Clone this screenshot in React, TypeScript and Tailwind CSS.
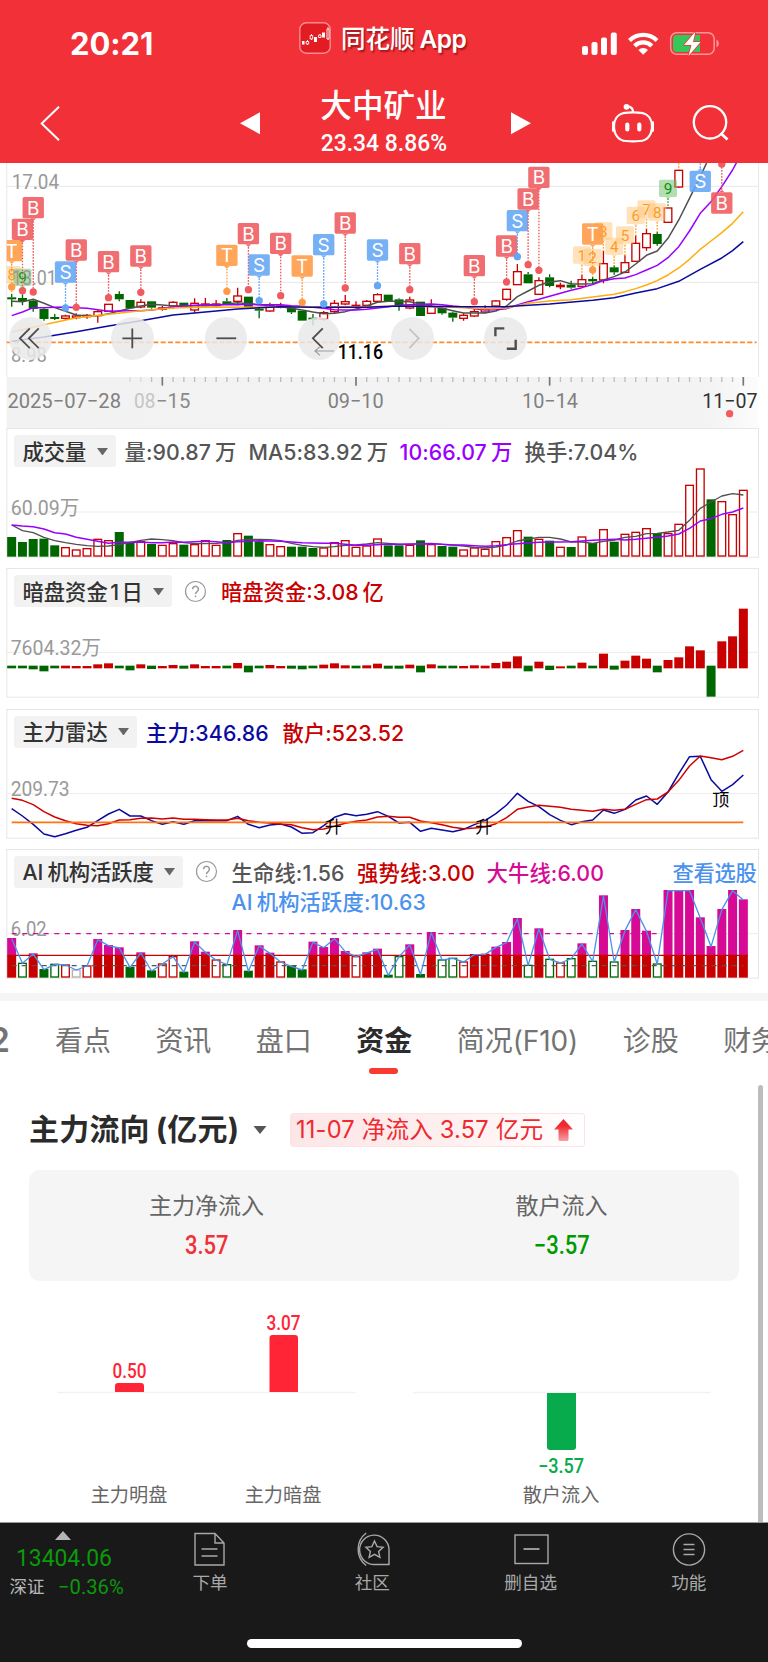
import type { ReactNode } from 'react'

// --- Types -------------------------------------------------------------------

type Point = [index: number, y: number]
type Candle = [color: 'r' | 'g', high: number, low: number, top: number, bottom: number]
type Bar = [kind: string, value: number]

// Charts are drawn in 3x units (2304 wide) on a 768px page
const FIRST = 35
const STEP = 32.28
const cx = (i: number) => FIRST + STEP * i

const RED = '#c80000'
const GREEN = '#006600'
const MAGENTA = '#d60a95'
const PURPLE = '#9a00ff'
const GRAY = '#505050'
const NAVY = '#0a0aa0'

const line = (points: Point[]) => points.map(([i, y]) => `${cx(i).toFixed(1)},${y}`).join(' ')
const series = (values: number[]) => line(values.map((y, i) => [i, y] as Point))

const parseBars = (source: string): Bar[] =>
  source.split(' ').map((item) => [item[0], Number(item.slice(1))])

// --- Data --------------------------------------------------------------------

const candles: Candle[] = [
  ['g', 402, 440, 412, 418], ['g', 405, 436, 414, 424], ['g', 418, 455, 422, 447],
  ['g', 445, 482, 447, 477], ['g', 462, 480, 471, 477], ['r', 464, 480, 468, 475],
  ['r', 460, 478, 468, 473], ['r', 462, 476, 466, 470], ['r', 450, 488, 455, 467],
  ['r', 432, 455, 433, 454], ['g', 394, 424, 402, 418], ['g', 420, 445, 420, 445],
  ['r', 418, 445, 427, 441], ['g', 424, 446, 424, 443], ['r', 438, 452, 444, 448],
  ['r', 424, 446, 427, 438], ['g', 428, 440, 428, 440], ['r', 415, 458, 430, 450],
  ['r', 414, 440, 432, 437], ['r', 420, 440, 432, 437], ['g', 414, 435, 424, 433],
  ['r', 383, 436, 408, 424], ['g', 410, 442, 410, 442], ['g', 440, 475, 446, 452],
  ['r', 428, 455, 436, 453], ['r', 428, 445, 438, 442], ['g', 440, 462, 443, 457],
  ['g', 452, 482, 452, 482], ['g', 462, 496, 473, 479], ['r', 453, 482, 458, 477],
  ['r', 420, 460, 430, 455], ['r', 405, 436, 425, 432], ['r', 424, 444, 436, 440],
  ['r', 420, 440, 424, 436], ['r', 400, 428, 404, 424], ['g', 404, 424, 404, 424],
  ['g', 415, 452, 418, 436], ['r', 410, 448, 420, 444], ['g', 425, 468, 425, 468],
  ['r', 418, 462, 440, 460], ['g', 440, 464, 444, 460], ['g', 455, 485, 458, 473],
  ['r', 460, 482, 466, 475], ['r', 448, 470, 455, 468], ['r', 436, 460, 448, 456],
  ['r', 420, 440, 423, 438], ['r', 386, 422, 388, 418], ['r', 312, 375, 335, 374],
  ['g', 336, 370, 343, 370], ['r', 352, 404, 362, 403], ['g', 343, 382, 352, 378],
  ['r', 368, 388, 376, 380], ['g', 362, 386, 374, 383], ['r', 344, 380, 359, 379],
  ['g', 350, 372, 357, 364], ['r', 272, 370, 311, 360], ['g', 316, 344, 322, 337],
  ['r', 285, 340, 308, 337], ['r', 226, 305, 250, 304], ['r', 206, 272, 221, 263],
  ['g', 215, 257, 222, 252], ['r', 143, 189, 144, 187], ['r', 28, 83, 31, 81],
]

const ma5 = [
  424, 425, 418, 430, 443, 454, 465, 468, 467, 461, 453, 445, 438, 433, 435, 438, 438, 437, 437, 436,
  432, 428, 431, 434, 437, 440, 445, 450, 456, 461, 460, 455, 447, 438, 427, 424, 424, 425, 432, 438,
  445, 452, 459, 459, 459, 453, 438, 410, 393, 376, 366, 362, 372, 372, 371, 360, 350, 336, 312, 286,
  273, 235, 180, 115, 50, -20,
]
const ma10 = [
  467, 456, 443, 443, 442, 441, 443, 445, 449, 454, 453, 452, 452, 450, 446, 441, 438, 436, 434, 434,
  434, 434, 433, 434, 434, 434, 437, 439, 442, 445, 449, 450, 450, 448, 444, 440, 436, 434, 433, 432,
  434, 438, 441, 446, 450, 449, 446, 435, 425, 418, 409, 400, 391, 383, 374, 362, 356, 354, 344, 330,
  316, 293, 260, 213, 160, 125, 80, 30, -30,
]
const ma20: Point[] = [
  [0, 516], [3, 494], [6, 473], [9, 463], [12, 452], [15, 444], [18, 441], [21, 442], [24, 441],
  [28, 440], [33, 440], [36, 438], [40, 440], [44, 446], [46, 444], [48, 430], [50, 423], [52, 419],
  [54, 411], [56, 403], [57, 395], [58, 386], [59, 375], [60, 362], [61, 345], [62, 324], [63, 298],
  [64, 268], [65, 243], [66, 218], [67, 190], [68, 155],
]
const ma30: Point[] = [
  [0, 544], [3, 531], [6, 515], [9, 498], [12, 482], [15, 465], [18, 456], [21, 447], [25, 440],
  [28, 442], [33, 442], [36, 438], [42, 440], [46, 440], [50, 432], [54, 421], [56, 413], [58, 399],
  [60, 386], [62, 364], [64, 328], [66, 294], [67, 272], [68, 245],
]

const signals: [index: number, letter: 'B' | 'S' | 'T', top: number, dot: number][] = [
  [0, 'T', 240, 381], [1, 'B', 176, 392], [2, 'B', 111, 396], [6, 'B', 238, 442], [5, 'S', 304, 444],
  [9, 'B', 273, 413], [12, 'B', 256, 397], [20, 'T', 254, 394], [22, 'B', 189, 389],
  [23, 'S', 283, 422], [25, 'B', 218, 407], [27, 'T', 286, 427], [29, 'S', 222, 432],
  [31, 'B', 157, 384], [34, 'S', 238, 377], [37, 'B', 249, 389], [43, 'B', 285, 425],
  [46, 'B', 226, 366], [47, 'S', 150, 290], [48, 'B', 85, 314], [49, 'B', 20, 331],
  [54, 'T', 190, 330],
]
const signalsAbove: [index: number, letter: 'B' | 'S' | 'T', top: number, dot: number][] = [
  [64, 'S', 32, -20], [66, 'B', 97, 12],
]
const signalColor = { B: '#ef5b5f', S: '#64a6f4', T: '#ff9a45' }

const counts: [index: number, label: string, top: number, end: number][] = [
  [53, '1', 259, 346], [54, '2', 266, 352], [55, '3', 187, 274], [56, '4', 233, 318],
  [57, '5', 199, 287], [58, '6', 140, 228], [59, '7', 121, 208], [60, '8', 130, 217],
  [61, '9', 59, 144], [0, '8', 318, 402], [1, '9', 326, 405],
]

const volumes = parseBars(
  'g337 g352 g343 g342 g362 r367 r374 r370 r342 r346 g322 g355 r349 g358 r360 r355 g360 r358 r346 r360 g346 r325 g333 g350 r358 r364 g366 g366 g370 r368 r352 r346 r366 r362 r341 g362 g362 r360 g347 r358 g364 g366 r374 r368 r372 r349 r337 r316 g336 r342 g348 r366 g367 r335 g355 r313 g351 r327 r321 r310 g325 r325 r297 r180 r131 g224 r229 r268 r195',
)
const volMa5 = [
  301, 318, 324, 338, 348, 354, 359, 363, 365, 364, 360, 353, 347, 343, 345, 348, 354, 357, 357, 356,
  354, 347, 344, 344, 345, 348, 356, 362, 366, 368, 366, 362, 361, 358, 354, 356, 359, 359, 357, 356,
  359, 361, 364, 368, 370, 367, 361, 349, 343, 338, 338, 343, 352, 352, 356, 350, 346, 338, 335, 327,
  326, 322, 317, 287, 251, 232, 214, 207, 211,
]
const volMa10 = [
  301, 304, 306, 313, 324, 328, 338, 344, 350, 356, 353, 353, 352, 354, 354, 352, 353, 351, 350, 351,
  354, 351, 350, 348, 349, 350, 352, 354, 355, 356, 356, 359, 362, 362, 360, 358, 359, 358, 358, 357,
  359, 361, 361, 363, 365, 363, 360, 357, 355, 353, 352, 352, 351, 349, 347, 345, 344, 346, 344, 341,
  338, 334, 328, 311, 289, 282, 269, 262, 250,
]

const darkFunds = parseBars(
  'g8 g8 g11 g17 g8 r8 r7 r7 r12 r15 g8 g14 r12 g10 r7 r10 g9 r12 r7 r7 g8 r16 g20 g8 r10 r7 g9 g11 g8 r11 r15 r9 g8 r9 r14 g9 g9 r11 g20 r12 g8 g8 r7 r9 r8 r16 r20 r36 g17 r20 g13 r6 g8 r17 g8 r44 g12 r23 r38 r29 g20 r25 r33 r66 r54 g93 r81 r96 r179',
)

const radarMain = [
  325, 347, 372, 401, 409, 400, 390, 381, 361, 341, 327, 347, 347, 361, 372, 364, 372, 361, 361, 361,
  361, 348, 372, 382, 374, 371, 380, 399, 397, 376, 351, 340, 346, 342, 334, 348, 368, 366, 393, 384,
  389, 394, 387, 373, 361, 340, 314, 279, 303, 319, 343, 360, 373, 364, 359, 329, 339, 327, 299, 287,
  312, 275, 220, 169, 168, 238, 273, 253, 224,
]
const radarRetail = [
  294, 300, 313, 334, 350, 361, 370, 375, 376, 370, 359, 358, 354, 353, 356, 353, 357, 357, 358, 359,
  359, 354, 361, 366, 368, 371, 373, 382, 388, 386, 378, 369, 363, 359, 350, 348, 351, 351, 362, 367,
  373, 381, 385, 383, 380, 370, 352, 327, 320, 315, 318, 321, 327, 330, 333, 327, 330, 327, 312, 298,
  296, 275, 240, 197, 167, 172, 178, 168, 150,
]

// M = above strong line, R/G = solid, r/g/x = hollow
const activity = parseBars(
  'M714 g788 M760 G807 g791 r793 x808 r796 M717 M735 M742 G800 M757 G811 r790 r768 G815 M724 M755 r778 g792 M690 G812 M736 M758 r784 G797 G808 M725 M741 M714 M753 r768 M757 M746 G824 g768 M733 G822 M696 g778 g773 r784 R762 R761 M740 M726 M654 g794 M685 g776 r787 g774 M730 g782 M586 g784 M690 M627 M692 g790 M570 M570 M570 M652 M738 M627 M570 M598',
)

const tabs = ['看点', '资讯', '盘口', '资金', '简况(F10)', '诊股', '财务']

// --- Small parts -------------------------------------------------------------

function ChartLabel({ x, y, width, color = '#999', weight = 400, children }: {
  x: number
  y: number
  width: number
  color?: string
  weight?: number
  children: string
}) {
  return (
    <text x={x} y={y} textLength={width} lengthAdjust="spacingAndGlyphs" fill={color} fontSize={61} fontWeight={weight} className="font-[Roboto,'Noto_Sans_CJK_SC',sans-serif]">
      {children}
    </text>
  )
}

function Trend({ points, color, width = 4.5 }: { points: string; color: string; width?: number }) {
  return <polyline points={points} fill="none" stroke={color} strokeWidth={width} strokeLinejoin="round" />
}

function Signal({ index, letter, top, dot }: { index: number; letter: 'B' | 'S' | 'T'; top: number; dot: number }) {
  const x = cx(index)
  const color = signalColor[letter]
  const up = dot < top
  const base = up ? top : top + 64
  const tip = up ? top - 8 : top + 72
  return (
    <g>
      <line x1={x} x2={x} y1={tip} y2={dot} stroke={color} strokeWidth={4} strokeDasharray="5 4" />
      <circle cx={x} cy={dot} r={11} fill={color} />
      <g opacity={0.88}>
        <rect x={x - 32} y={top} width={64} height={64} rx={5} fill={color} />
        <path d={`M${x - 9} ${base}L${x} ${tip}L${x + 9} ${base}z`} fill={color} />
      </g>
      <text x={x} y={top + 53} textAnchor="middle" fontSize={57} fontWeight={400} fill="#fff" className="font-[Inter,sans-serif]">
        {letter}
      </text>
    </g>
  )
}

function Count({ index, label, top, end }: { index: number; label: string; top: number; end: number }) {
  const x = cx(index)
  const green = label === '9'
  const fill = green ? '#6cc06c' : '#ffc77d'
  return (
    <g>
      <line x1={x} x2={x} y1={top + 56} y2={end} stroke={green ? '#2fa52f' : '#ffa733'} strokeWidth={4} strokeDasharray="5 4" />
      <g opacity={0.52}>
        <rect x={x - 27} y={top} width={54} height={52} rx={5} fill={fill} />
        <path d={`M${x - 7} ${top + 52}L${x} ${top + 60}L${x + 7} ${top + 52}z`} fill={fill} />
      </g>
      <text x={x} y={top + 43} textAnchor="middle" fontSize={46} fontWeight={400} fill={green ? '#0a930a' : '#ff9a1f'} className="font-[Roboto,sans-serif]">
        {label}
      </text>
    </g>
  )
}

function Selector({ className, children }: { className: string; children: ReactNode }) {
  return (
    <div className={`flex h-8 shrink-0 items-center justify-between rounded-[3px] bg-[#f2f2f2] pr-2 pl-[9px] text-[#333] ${className}`}>
      <span className="pt-px">{children}</span>
      <svg className="h-[7.5px] w-[11px]" viewBox="0 0 11 7.5">
        <path d="M0 0H11L5.5 7.5z" fill="#666" />
      </svg>
    </div>
  )
}

function Help() {
  return (
    <svg className="mt-[4.5px] mr-[14px] ml-[12px] h-[23px] w-[23px] shrink-0" viewBox="0 0 23 23" fill="none" stroke="#999" strokeWidth="1.2">
      <circle cx="11.5" cy="11.5" r="10" />
      <path d="M8.600 9.200a2.900 2.900 0 1 1 4.600 2.300c-1.100.8-1.700 1.200-1.700 2.400" strokeWidth="1.500" />
      <circle cx="11.500" cy="16.300" r=".6" fill="#999" strokeWidth=".6" />
    </svg>
  )
}

function Panel({ top, grid, chart, children }: { top: number; grid: number; chart: ReactNode; children: ReactNode }) {
  return (
    <section className="relative h-[130px] text-[21.3px] leading-8 font-medium whitespace-nowrap">
      <svg className="absolute inset-0 h-[130px] w-[768px]" viewBox={`0 ${top} 2304 390`}>
        <rect x={20.5} y={top + 1.5} width={2255} height={386} fill="#fff" stroke="#e6e6e6" strokeWidth={3} />
        <line x1={20} x2={2276} y1={grid} y2={grid} stroke="#ececec" strokeWidth={3} />
        {chart}
      </svg>
      <div className="relative flex pt-[7px] pl-[13.5px]">{children}</div>
    </section>
  )
}

// --- Header ------------------------------------------------------------------

function Header() {
  return (
    <header className="h-[163px] bg-[#f23037] text-white">
      <div className="flex h-[76px] pt-[22px]">
        <div className="ml-[70px] w-[229px] pt-[3px] font-[Inter,sans-serif] text-[31px] leading-[38px] font-bold tracking-[-0.1px]">
          20:21
        </div>
        <svg className="h-8 w-8" viewBox="0 0 32 32">
          <rect x=".8" y=".8" width="30.4" height="30.4" rx="6.5" fill="#e31b23" stroke="#f78c90" strokeWidth="1.4" />
          <path d="M3 19h2.500v3.500H3zM15 15h3v5h-3zM23 10.500h3v5h-3z" fill="#fff" />
          <path d="M8.500 18v5M12.500 12v6M21 12v4M29 5v13" stroke="#fff" strokeWidth=".8" />
          <path d="M7.200 19.500h2.500v2.500H7.200zM11.200 13.500h2.500v3.500h-2.500zM19.600 13h2.400v2.500h-2.400zM28 7h2v10h-2z" fill="#e31b23" stroke="#fff" strokeWidth=".9" />
        </svg>
        <div className="ml-[10px] w-[241px] pt-px text-[24.500px] leading-[32px] font-medium whitespace-nowrap [text-shadow:1.5px_2px_1.500px_rgba(80,0,0,.5)]">
          同花顺<span className="ml-[5px] font-semibold tracking-[-0.5px]">App</span>
        </div>
        <svg className="mt-[9px] h-[26px] w-[140px]" viewBox="582 31 140 26">
          <g fill="#fff">
            <rect x="582" y="46" width="6" height="9" rx="2" />
            <rect x="591.500" y="42" width="6" height="13" rx="2" />
            <rect x="601" y="37.500" width="6" height="17.500" rx="2" />
            <rect x="610.800" y="32.500" width="6" height="22.500" rx="2" />
          </g>
          <g fill="none" stroke="#fff" strokeWidth="4.200">
            <path d="M629.500 40.500a19.600 19.600 0 0 1 27.500 0" />
            <path d="M634.600 46a12.200 12.200 0 0 1 17.200 0" />
          </g>
          <path d="M643.200 54.800l-4.800-4.800a6.800 6.800 0 0 1 9.600 0z" fill="#fff" />
          <rect x="670.700" y="32.700" width="43.500" height="21.500" rx="6" fill="none" stroke="#f9989b" strokeWidth="1.500" />
          <path d="M716.500 39.500v8q2.300-1.200 2.300-4t-2.300-4z" fill="#f9989b" />
          <path d="M676.500 35h23.500v17h-23.500q-3.500 0-3.500-3.500v-10q0-3.500 3.500-3.500z" fill="#35c759" />
          <path d="M695.500 31.500L684 45h7.500L688.500 56 700.500 42h-7.500z" fill="#fff" stroke="#f23037" strokeWidth="1.500" strokeLinejoin="round" paintOrder="stroke" />
        </svg>
      </div>

      <div className="flex h-[87px]">
        <svg className="mt-[30px] ml-10 h-[35px] w-5" viewBox="0 0 20 35" fill="none" stroke="#fff" strokeWidth="2">
          <path d="M19 .7L1.700 17.500 19 34.300" />
        </svg>
        <svg className="mt-9 ml-[180px] h-[22.500px] w-5" viewBox="0 0 20 22">
          <path d="M20 0V22L0 11z" fill="#fff" />
        </svg>
        <div className="ml-[49px] flex w-[149px] flex-col items-center">
          <h1 className="mt-[10px] text-[31.600px] leading-[40px] font-medium whitespace-nowrap">大中矿业</h1>
          <div className="mt-[3px] origin-center scale-x-[.93] font-[Roboto,sans-serif] text-[24.600px] leading-7 font-medium whitespace-nowrap">
            23.34 8.86%
          </div>
        </div>
        <svg className="mt-9 ml-[53px] h-[22.500px] w-5" viewBox="0 0 20 22">
          <path d="M0 0V22L20 11z" fill="#fff" />
        </svg>
        <svg className="mt-[27px] ml-[81px] h-[40px] w-[42px]" viewBox="612 103 42 40" fill="none" stroke="#fff" strokeWidth="2.200">
          <path d="M623 113.200q10-1.500 20 0c6 1.500 9 7 9 13 0 9-5 14.500-12 14.800q-7 .6-14 0c-7-.3-12-5.800-12-14.800 0-6 3-11.500 9-13z" />
          <path d="M633 112c0-4-2-5.600-6-5.600" />
          <circle cx="626.500" cy="106.800" r="1.800" fill="#fff" />
          <path d="M614 121.500q-2 5 0 10M652 121.500q2 5 0 10" strokeWidth="3" />
          <path d="M627.300 124.500v5M639.300 124.500v5" strokeWidth="4.200" strokeLinecap="round" />
        </svg>
        <svg className="mt-[28px] ml-[38px] h-[38px] w-[37px]" viewBox="692 104 37 38" fill="none" stroke="#fff" strokeWidth="2.300">
          <circle cx="710" cy="122.300" r="16.200" />
          <path d="M720.500 133l7 6.500" strokeWidth="2.800" />
        </svg>
      </div>
    </header>
  )
}

// --- Candlestick chart -------------------------------------------------------

function RoundButton({ faded, children }: { faded?: boolean; children: ReactNode }) {
  return (
    <button className="h-[42.600px] w-[42.600px] rounded-full bg-[#e9e9e9]/85 p-0">
      <svg className="h-full w-full" viewBox="0 0 43 43" fill="none" stroke={faded ? '#c4c4c4' : '#4d4d4d'} strokeWidth="1.800">
        {children}
      </svg>
    </button>
  )
}

function PriceChart() {
  return (
    <section className="relative h-[265.300px]">
      <svg className="h-[265.300px] w-[768px]" viewBox="0 9 2304 796">
        <defs>
          <linearGradient id="axis" x1="0" x2="1">
            <stop offset="0" stopColor="#f2f2f2" />
            <stop offset=".93" stopColor="#f3f3f3" />
            <stop offset="1" stopColor="#fcfcfc" />
          </linearGradient>
          <clipPath id="plot">
            <rect x="20" y="9" width="2256" height="642" />
          </clipPath>
        </defs>
        <rect x="20" y="651" width="2256" height="154" fill="url(#axis)" />
        <g stroke="#e8e8e8" strokeWidth="3">
          <line x1="20" x2="20" y1="9" y2="651" />
          <line x1="2276" x2="2276" y1="9" y2="651" />
          <line x1="20" x2="2276" y1="79" y2="79" />
          <line x1="20" x2="2276" y1="367" y2="367" />
        </g>
        <line x1="20" x2="2270" y1="547" y2="547" stroke="#ff8a24" strokeWidth="5" strokeDasharray="15 7" />

        <g clipPath="url(#plot)">
          {candles.map(([color, high, low, top, bottom], i) => {
            const x = cx(i)
            const h = Math.max(bottom - top, 4)
            return (
              <g key={i} stroke={color === 'r' ? RED : GREEN} strokeWidth={4}>
                <path d={`M${x} ${high}V${top}M${x} ${bottom}V${low}`} />
                {color === 'r' ? (
                  <rect x={x - 11.5} y={top} width={23} height={h} fill="#fff" />
                ) : (
                  <rect x={x - 13.5} y={top} width={27} height={h} fill={GREEN} stroke="none" />
                )}
              </g>
            )
          })}
          <Trend points={series(ma5)} color={GRAY} />
          <Trend points={series(ma10)} color={PURPLE} />
          <Trend points={line(ma20)} color="#ffad0d" />
          <Trend points={line(ma30)} color={NAVY} />
          {counts.map(([index, label, top, end]) => (
            <Count key={index} index={index} label={label} top={top} end={end} />
          ))}
          {signals.map(([index, letter, top, dot]) => (
            <Signal key={index} index={index} letter={letter} top={top} dot={dot} />
          ))}
          {signalsAbove.map(([index, letter, top, dot]) => (
            <Signal key={index} index={index} letter={letter} top={top} dot={dot} />
          ))}
          <line x1={cx(62)} x2={cx(62)} y1={9} y2={30} stroke="#ffa733" strokeWidth={4} strokeDasharray="5 4" />
        </g>

        <ChartLabel x={35} y={88} width={142}>17.04</ChartLabel>
        <ChartLabel x={36} y={375} width={134}>13.01</ChartLabel>
        <ChartLabel x={33} y={606} width={107}>8.98</ChartLabel>

        {Array.from({ length: 58 }, (_, k) => k + 11).map((i) => {
          const major = [14, 32, 50, 68].includes(i)
          return (
            <line
              key={i}
              x1={cx(i)}
              x2={cx(i)}
              y1={651}
              y2={major ? 677 : 666}
              stroke={major ? '#777' : '#bdbdbd'}
              strokeWidth={major ? 5 : 4}
              opacity={i < 13 ? 0.45 : 1}
            />
          )
        })}
        <ChartLabel x={22} y={745} width={341} color="#808080">2025−07−28</ChartLabel>
        <ChartLabel x={402} y={745} width={64} color="#c4c4c4">08</ChartLabel>
        <ChartLabel x={468} y={745} width={103} color="#8a8a8a">−15</ChartLabel>
        <ChartLabel x={983} y={745} width={168} color="#808080">09−10</ChartLabel>
        <ChartLabel x={1566} y={745} width={168} color="#808080">10−14</ChartLabel>
        <ChartLabel x={2107} y={745} width={166} color="#333">11−07</ChartLabel>
        <circle cx="2189" cy="761" r="11" fill="#f25c5c" />
      </svg>

      <div className="absolute top-[154px] left-[9px] flex gap-[50.700px]">
        <div className="mr-[9px] flex">
          <RoundButton>
            <path d="M21 11.500L11 21.500 21 31.500M30 11.500L20 21.500 30 31.500" />
          </RoundButton>
        </div>
        <RoundButton>
          <path d="M21.500 11.500v20M11.500 21.500h20" />
        </RoundButton>
        <RoundButton>
          <path d="M11.500 21.500h20" />
        </RoundButton>
        <RoundButton>
          <path d="M25 11.500L15 21.500 25 31.500" />
        </RoundButton>
        <RoundButton faded>
          <path d="M18.500 12L28 21.500 18.500 31.500" />
        </RoundButton>
        <RoundButton>
          <path d="M11.500 19.500v-8h9M23 32h9v-9" strokeWidth="2.400" />
        </RoundButton>
      </div>
      <svg className="absolute top-[180px] left-[312px] h-6 w-[76px]" viewBox="936 549 228 72">
        <path d="M1002 573H946M960 560L945 573L960 586" fill="none" stroke="#9c9c9c" strokeWidth="3.500" />
        <ChartLabel x={1013} y={597} width={136} color="#000" weight={500}>11.16</ChartLabel>
      </svg>
    </section>
  )
}

// --- Indicator panels --------------------------------------------------------

function VolumePanel() {
  return (
    <Panel
      top={10}
      grid={262}
      chart={
        <>
          <ChartLabel x={32} y={271} width={206}>60.09万</ChartLabel>
          {volumes.map(([kind, top], i) =>
            kind === 'g' ? (
              <rect key={i} x={cx(i) - 13.5} y={top} width={27} height={396 - top} fill={GREEN} />
            ) : (
              <rect key={i} x={cx(i) - 11.5} y={top + 2} width={23} height={392 - top} fill="#fff" stroke={RED} strokeWidth={4} />
            ),
          )}
          <Trend points={series(volMa5)} color={GRAY} width={4} />
          <Trend points={series(volMa10)} color={PURPLE} />
        </>
      }
    >
      <Selector className="w-[102px]">成交量</Selector>
      <div className="flex pt-px pl-[9px] tracking-[0.1px]">
        <span className="w-[124px] text-[#555]">量:90.87<i className="ml-1 not-italic">万</i></span>
        <span className="w-[151px] text-[#555]">MA5:83.92<i className="ml-1 not-italic">万</i></span>
        <span className="w-[125px] text-[#9a00ff]">10:66.07<i className="ml-1 not-italic">万</i></span>
        <span className="text-[#555]">换手:7.04%</span>
      </div>
    </Panel>
  )
}

function DarkFundsPanel() {
  return (
    <Panel
      top={430}
      grid={683}
      chart={
        <>
          <ChartLabel x={32} y={692} width={271}>7604.32万</ChartLabel>
          {darkFunds.map(([kind, size], i) => (
            <rect key={i} x={cx(i) - 13.5} y={kind === 'g' ? 723 : 731 - size} width={27} height={size} fill={kind === 'g' ? GREEN : RED} />
          ))}
        </>
      }
    >
      <Selector className="w-[158.500px]">
        暗盘资金<i className="mx-[2.500px] not-italic">1</i>日
      </Selector>
      <Help />
      <span className="pt-px text-[#c80000]">暗盘资金:3.08<i className="ml-1 not-italic">亿</i></span>
    </Panel>
  )
}

function RadarPanel() {
  return (
    <Panel
      top={26}
      grid={280}
      chart={
        <>
          <ChartLabel x={32} y={288} width={177}>209.73</ChartLabel>
          <Trend points={series(radarMain)} color={NAVY} />
          <Trend points={series(radarRetail)} color="#d00000" />
          <line x1={35} x2={2230} y1={366} y2={366} stroke="#ff7212" strokeWidth={5.5} />
          <g fontSize={51} fill="#000" fontWeight={400} className="font-['Noto_Sans_CJK_SC',sans-serif]">
            <text x={974} y={398}>升</text>
            <text x={1426} y={398}>升</text>
            <text x={2137} y={316}>顶</text>
          </g>
        </>
      }
    >
      <Selector className="w-[123px]">主力雷达</Selector>
      <div className="flex pt-px pl-[9.500px] tracking-[0.1px]">
        <span className="w-[136.500px] text-[#0a0aa0]">主力:346.86</span>
        <span className="text-[#c80000]">散户:523.52</span>
      </div>
    </Panel>
  )
}

function ActivityBar({ index, kind, top }: { index: number; kind: string; top: number }) {
  const x = cx(index) - 13.5
  const h = 833 - top
  if (kind === 'M') {
    return (
      <g>
        <rect x={x} y={top} width={27} height={Math.max(765 - top, 3)} fill={MAGENTA} />
        <rect x={x} y={765} width={27} height={68} fill={RED} />
      </g>
    )
  }
  if (kind === 'R' || kind === 'G') {
    return <rect x={x} y={top} width={27} height={h} fill={kind === 'R' ? RED : GREEN} />
  }
  const stroke = kind === 'r' ? RED : kind === 'g' ? GREEN : '#b0b0b0'
  return <rect x={x + 2} y={top + 2} width={23} height={h - 4} fill="#fff" stroke={stroke} strokeWidth={4} />
}

function ActivityPanel() {
  return (
    <Panel
      top={447}
      grid={701}
      chart={
        <>
          <ChartLabel x={32} y={709} width={108}>6.02</ChartLabel>
          {activity.map(([kind, top], i) => (
            <ActivityBar key={i} index={i} kind={kind} top={top} />
          ))}
          <line x1={35} x2={2230} y1={797} y2={797} stroke="#555" strokeWidth={4} strokeDasharray="15 15" />
          <line x1={22} x2={2244} y1={766} y2={766} stroke={RED} strokeWidth={4} />
          <line x1={35} x2={1980} y1={701} y2={701} stroke={MAGENTA} strokeWidth={4} strokeDasharray="15 17" />
          <Trend points={series(activity.map(([, top]) => Math.min(top + 2, 826)))} color="#4b92ee" width={4} />
        </>
      }
    >
      <Selector className="w-[169px]">
        AI<i className="ml-1 not-italic">机构活跃度</i>
      </Selector>
      <Help />
      <div className="flex flex-col pt-px tracking-[0.15px]">
        <div className="flex">
          <span className="w-[125.500px] text-[#555]">生命线:1.56</span>
          <span className="w-[129.500px] text-[#c80000]">强势线:3.00</span>
          <span className="w-[186px] text-[#d60a95]">大牛线:6.00</span>
          <span className="tracking-[-0.3px] text-[#4b92ee]">查看选股</span>
        </div>
        <span className="-mt-[3px] text-[#4b92ee]">AI<i className="ml-1 not-italic">机构活跃度:10.63</i></span>
      </div>
    </Panel>
  )
}

// --- Fund flow ---------------------------------------------------------------

function TabBar() {
  return (
    <nav className="flex h-[92px] items-start overflow-hidden border-t-8 border-[#f5f5f5] text-[28px] leading-[40px] whitespace-nowrap text-[#737373]">
      <span className="mt-[19px] flex w-[10px] shrink-0 justify-end text-[34px] font-semibold">L2</span>
      <div className="mt-[20px] ml-[45px] flex gap-[44.600px]">
        {tabs.map((tab) => (
          <div key={tab} className={tab === '资金' ? 'relative font-semibold text-[#2b2b2b]' : 'tracking-[-0.100px]'}>
            {tab}
            {tab === '资金' && (
              <span className="absolute top-[47.500px] left-[13px] h-[6px] w-[29px] rounded-full bg-[#fb3a2f]" />
            )}
          </div>
        ))}
      </div>
    </nav>
  )
}

function Summary({ label, value, className }: { label: string; value: string; className: string }) {
  return (
    <div className="flex flex-1 flex-col items-center">
      <span className="mt-5 text-[23px] leading-8 text-[#666]">{label}</span>
      <span className={`mt-2 scale-x-[.88] font-[Roboto,sans-serif] text-[25px] leading-8 font-medium ${className}`}>{value}</span>
    </div>
  )
}

function FundFlow() {
  return (
    <section className="relative h-[437px] pt-[25px] pl-[29px]">
      <div className="flex h-[40px] items-center">
        <h2 className="w-[209px] text-[30px] font-bold tracking-[0.2px] whitespace-nowrap text-[#2b2b2b]">
          主力流向<span className="ml-[6px]">(亿元)</span>
        </h2>
        <svg className="ml-[15px] h-[8px] w-[14px]" viewBox="0 0 13 8">
          <path d="M0 0H13L6.500 8z" fill="#555" />
        </svg>
        <div className="ml-[23px] flex h-[34px] w-[294.500px] items-center rounded-[3px] border border-[#fde3e4] bg-linear-to-r from-[#fde6e7] via-[#feeeee] to-white pl-[5px] text-[23.600px] whitespace-nowrap text-[#ee2a30]">
          <span className="w-[246px] tracking-[0.2px]">11-07 净流入 3.57 亿元</span>
          <svg className="ml-[12px] h-[22px] w-[19px]" viewBox="0 0 19 22">
            <defs>
              <linearGradient id="rise" x1="0" x2="0" y1="0" y2="1">
                <stop offset=".3" stopColor="#ee2a30" />
                <stop offset="1" stopColor="#f7a0a3" />
              </linearGradient>
            </defs>
            <path d="M9.500 0L19 10.500H14.500V20.500q0 1.500-1.500 1.500H6q-1.500 0-1.500-1.500V10.500H0z" fill="url(#rise)" />
          </svg>
        </div>
      </div>

      <div className="mt-[20px] flex h-[111px] w-[710px] rounded-[10px] bg-[#f5f5f5]">
        <Summary label="主力净流入" value="3.57" className="text-[#f23037]" />
        <Summary label="散户流入" value="−3.57" className="text-[#009900]" />
      </div>

      <svg className="-ml-[29px] block h-[240px] w-[768px] font-[Roboto,sans-serif]" viewBox="0 1281 768 240" fontSize="19.700" fontWeight="500">
        <path d="M57.500 1392.500H355.500M413 1392.500H710.500" stroke="#f2f2f2" strokeWidth="1.500" />
        <path d="M115 1392V1386q0-3 3-3H141q3 0 3 3V1392zM269.500 1392V1338q0-3 3-3H295q3 0 3 3V1392z" fill="#ff2436" />
        <path d="M547 1393V1447q0 3 3 3H573q3 0 3-3V1393z" fill="#07ab4b" />
        <text x="112.500" y="1378" textLength="34" lengthAdjust="spacingAndGlyphs" fill="#ff2436">0.50</text>
        <text x="266.500" y="1329.500" textLength="34" lengthAdjust="spacingAndGlyphs" fill="#ff2436">3.07</text>
        <text x="538" y="1473" textLength="46" lengthAdjust="spacingAndGlyphs" fill="#07ab4b">−3.57</text>
        <g fill="#666" fontSize="19.200" fontWeight="400" textAnchor="middle" className="font-['Noto_Sans_CJK_SC',sans-serif]">
          <text x="129" y="1501.500">主力明盘</text>
          <text x="283" y="1501.500">主力暗盘</text>
          <text x="561" y="1501.500">散户流入</text>
        </g>
      </svg>
      <div className="absolute top-0 left-[757.500px] h-[437px] w-[5px] rounded-t-full bg-[#bdbdbd]" />
    </section>
  )
}

// --- Bottom bar --------------------------------------------------------------

function BottomItem({ label, className = '', children }: { label: string; className?: string; children: ReactNode }) {
  return (
    <div className={`flex flex-1 flex-col items-center ${className}`}>
      <svg className="mt-[8px] h-9 w-9" viewBox="0 0 36 36" fill="none" stroke="#a8a8a8" strokeWidth="1.400">
        {children}
      </svg>
      <span className="mt-[4px] text-[17.600px] leading-6 text-[#a8a8a8]">{label}</span>
    </div>
  )
}

function BottomBar() {
  return (
    <footer className="h-[140px] border-t border-[#999] bg-[#191919]">
      <div className="flex h-[116px]">
        <div className="relative w-[131px]">
          <svg className="mt-[8px] ml-[55px] block h-[9px] w-4" viewBox="0 0 16 9">
            <path d="M8 0L16 9H0z" fill="#b5b5b5" />
          </svg>
          <div className="mt-[4px] ml-[16px] origin-left scale-x-[.94] font-[Roboto,sans-serif] text-[24.300px] leading-7 text-[#0a9a0a]">
            13404.06
          </div>
          <div className="mt-[3px] flex items-center text-[17.500px] leading-6 whitespace-nowrap text-[#b8b8b8]">
            <span className="ml-[9.500px] w-[48px]">深证</span>
            <span className="origin-left scale-x-[.98] font-[Roboto,sans-serif] text-[20.600px] text-[#0a9a0a]">−0.36%</span>
          </div>
        </div>
        <BottomItem label="下单">
          <path d="M3 2.500H23L32 12V34H3z M23 2.500V12H32M9.500 18H25.500M9.500 25H25.500" />
        </BottomItem>
        <BottomItem label="社区" className="pl-1">
          <path d="M12.200 2A20.400 20.400 0 0 0 12.200 34.500" />
          <path d="M35 33.500H21A14.700 14.700 0 1 1 35 18.500z" />
          <path d="M20.500 10l2.600 5.600 6 .7-4.500 4.100 1.300 6-5.400-3-5.400 3 1.300-6-4.500-4.100 6-.7z" />
        </BottomItem>
        <BottomItem label="删自选">
          <rect x="2" y="4" width="33" height="28.500" />
          <path d="M10.500 18H26.500" strokeWidth="1.800" />
        </BottomItem>
        <BottomItem label="功能">
          <circle cx="18" cy="18.500" r="15.600" />
          <path d="M12.500 13.500h11M12.500 18.500h11M12.500 23.500h11" strokeWidth="1.700" />
        </BottomItem>
      </div>
      <div className="mx-auto h-[9.500px] w-[275px] rounded-full bg-white" />
    </footer>
  )
}

export default function App() {
  return (
    <main className="h-[1662px] w-[768px] overflow-hidden bg-white font-[Inter,'Noto_Sans_CJK_SC',sans-serif]">
      <Header />
      <PriceChart />
      <div className="flex h-[564.700px] flex-col gap-[10.200px]">
        <VolumePanel />
        <DarkFundsPanel />
        <RadarPanel />
        <ActivityPanel />
      </div>
      <TabBar />
      <FundFlow />
      <BottomBar />
    </main>
  )
}
